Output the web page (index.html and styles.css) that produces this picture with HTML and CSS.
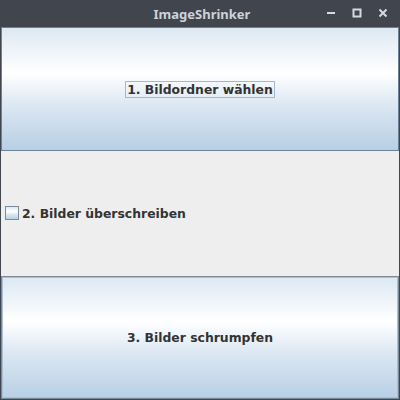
FILE: index.html
```html
<!DOCTYPE html>
<html>
<head>
<meta charset="utf-8">
<link rel="stylesheet" href="styles.css">
</head>
<body>
<div class="window">
  <div class="titlebar">
    <div class="title">ImageShrinker</div>
    <div class="controls">
      <svg class="ctl" width="12" height="12" viewBox="0 0 12 12"><rect x="2" y="5" width="8" height="2" fill="#d3dae3"/></svg>
      <svg class="ctl" width="12" height="12" viewBox="0 0 12 12"><rect x="2.5" y="2.5" width="7" height="7" fill="none" stroke="#d3dae3" stroke-width="2"/></svg>
      <svg class="ctl" width="12" height="12" viewBox="0 0 12 12"><path d="M2.5 2.5 L9.5 9.5 M9.5 2.5 L2.5 9.5" stroke="#d3dae3" stroke-width="2"/></svg>
    </div>
  </div>
  <div class="content">
    <button class="btn"><span class="focus">1. Bildordner wählen</span></button>
    <label class="check"><span class="box"></span><span>2. Bilder überschreiben</span></label>
    <button class="btn default"><span>3. Bilder schrumpfen</span></button>
  </div>
</div>
</body>
</html>
```
FILE: styles.css
```css
html, body {
  margin: 0;
  padding: 0;
  background: #41454d;
}
.window {
  width: 400px;
  height: 400px;
  box-sizing: border-box;
  background: #41454d;
  display: flex;
  flex-direction: column;
  padding: 0 1px 1px 1px;
}
.titlebar {
  height: 27px;
  flex: none;
  display: flex;
  align-items: center;
  justify-content: center;
  position: relative;
}
.title {
  font-family: "Noto Sans", "DejaVu Sans", sans-serif;
  font-weight: bold;
  font-size: 13px;
  color: #ccd3db;
  padding-left: 4px;
}
.controls {
  position: absolute;
  right: 10px;
  top: 7px;
  display: flex;
  gap: 14px;
}
.ctl {
  display: block;
}
.content {
  flex: 1;
  background: #eeeeee;
  display: grid;
  grid-template-rows: 1fr 1fr 1fr;
}
.btn {
  margin: 0;
  border: 1px solid #6f8295;
  background: linear-gradient(to bottom, #dde8f3 0%, #ffffff 37%, #dde8f3 62%, #b8cfe5 100%);
  font-family: "DejaVu Sans", sans-serif;
  font-weight: bold;
  font-size: 12.4px;
  color: #333333;
  display: flex;
  align-items: center;
  justify-content: center;
  padding: 0;
}
.focus {
  border: 1px solid #a3b8cc;
  padding: 0 1px;
  line-height: 15px;
}
.btn.default {
  border: 1px solid #7a8a99;
  box-shadow: inset 0 0 0 1px #a8bfd6;
  margin-top: 1px;
}
.check {
  display: flex;
  align-items: center;
  gap: 3px;
  padding-left: 4px;
  font-family: "DejaVu Sans", sans-serif;
  font-weight: bold;
  font-size: 12.4px;
  color: #333333;
}
.box {
  width: 12px;
  height: 12px;
  border: 1px solid #7a8a99;
  background: linear-gradient(to bottom, #dde8f3 0%, #ffffff 37%, #dde8f3 62%, #b8cfe5 100%);
}
```
